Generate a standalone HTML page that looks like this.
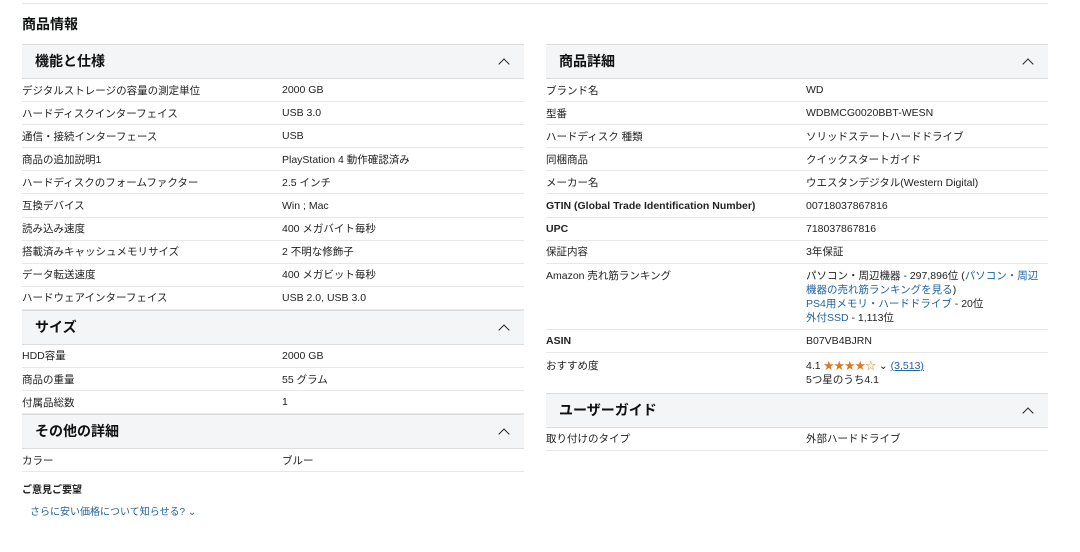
<!DOCTYPE html>
<html><head><meta charset="utf-8"><style>
*{margin:0;padding:0;box-sizing:border-box}
body{width:1080px;height:552px;background:#fff;font-family:"Liberation Sans","Noto Sans CJK JP",sans-serif;color:#222;font-size:10.5px;position:relative;overflow:hidden}
.top{position:absolute;left:22px;top:3px;width:1026px;border-top:1px solid #e7e7e7}
h2{position:absolute;left:22px;top:14px;font-size:14px;font-weight:bold;color:#0f1111}
.col{position:absolute;top:44px;width:502px}
.hd{height:35px;background:#f3f5f6;border-top:1px solid #ddd;border-bottom:1px solid #ddd;position:relative;font-size:14px;font-weight:bold;padding:6px 0 0 13px;color:#0f1111}
.hd:after{content:"";position:absolute;right:16px;top:15px;width:7px;height:7px;border-left:1.5px solid #222;border-top:1.5px solid #222;transform:rotate(45deg)}
.r{height:23.1px;border-bottom:1px solid #e7e7e7;display:flex;align-items:center}
.r .k{width:260px}
.r.t{align-items:flex-start;padding-top:5px;line-height:14px}
a,.l{color:#2162a1;text-decoration:none}
.st{color:#de7921}
</style></head><body>
<div class="top"></div>
<h2>商品情報</h2>
<div class="col" style="left:22px">
<div class="hd">機能と仕様</div>
<div class="r"><div class="k">デジタルストレージの容量の測定単位</div><div>2000 GB</div></div>
<div class="r"><div class="k">ハードディスクインターフェイス</div><div>USB 3.0</div></div>
<div class="r"><div class="k">通信・接続インターフェース</div><div>USB</div></div>
<div class="r"><div class="k">商品の追加説明1</div><div>PlayStation 4 動作確認済み</div></div>
<div class="r"><div class="k">ハードディスクのフォームファクター</div><div>2.5 インチ</div></div>
<div class="r"><div class="k">互換デバイス</div><div>Win ; Mac</div></div>
<div class="r"><div class="k">読み込み速度</div><div>400 メガバイト毎秒</div></div>
<div class="r"><div class="k">搭載済みキャッシュメモリサイズ</div><div>2 不明な修飾子</div></div>
<div class="r"><div class="k">データ転送速度</div><div>400 メガビット毎秒</div></div>
<div class="r"><div class="k">ハードウェアインターフェイス</div><div>USB 2.0, USB 3.0</div></div>
<div class="hd">サイズ</div>
<div class="r"><div class="k">HDD容量</div><div>2000 GB</div></div>
<div class="r"><div class="k">商品の重量</div><div>55 グラム</div></div>
<div class="r"><div class="k">付属品総数</div><div>1</div></div>
<div class="hd">その他の詳細</div>
<div class="r"><div class="k">カラー</div><div>ブルー</div></div>
<div style="margin-top:9px;font-size:10px;font-weight:bold">ご意見ご要望</div>
<div style="margin-top:7px;margin-left:8px;font-size:10px" class="l">さらに安い価格について知らせる? ⌄</div>
</div>
<div class="col" style="left:546px">
<div class="hd">商品詳細</div>
<div class="r"><div class="k">ブランド名</div><div>WD</div></div>
<div class="r"><div class="k">型番</div><div>WDBMCG0020BBT-WESN</div></div>
<div class="r"><div class="k">ハードディスク 種類</div><div>ソリッドステートハードドライブ</div></div>
<div class="r"><div class="k">同梱商品</div><div>クイックスタートガイド</div></div>
<div class="r"><div class="k">メーカー名</div><div>ウエスタンデジタル(Western Digital)</div></div>
<div class="r"><div class="k" style="font-weight:bold">GTIN (Global Trade Identification Number)</div><div>00718037867816</div></div>
<div class="r"><div class="k" style="font-weight:bold">UPC</div><div>718037867816</div></div>
<div class="r"><div class="k">保証内容</div><div>3年保証</div></div>
<div class="r t" style="height:66px"><div class="k">Amazon 売れ筋ランキング</div><div style="width:240px">パソコン・周辺機器 - 297,896位 (<span class="l">パソコン・周辺機器の売れ筋ランキングを見る</span>)<br><span class="l">PS4用メモリ・ハードドライブ</span> - 20位<br><span class="l">外付SSD</span> - 1,113位</div></div>
<div class="r"><div class="k" style="font-weight:bold">ASIN</div><div>B07VB4BJRN</div></div>
<div class="r t" style="height:40px;border-bottom:none;padding-top:6px"><div class="k">おすすめ度</div><div>4.1 <span class="st">★★★★☆</span> ⌄ <span class="l" style="text-decoration:underline">(3,513)</span><br>5つ星のうち4.1</div></div>
<div class="hd">ユーザーガイド</div>
<div class="r"><div class="k">取り付けのタイプ</div><div>外部ハードドライブ</div></div>
</div>
</body></html>
